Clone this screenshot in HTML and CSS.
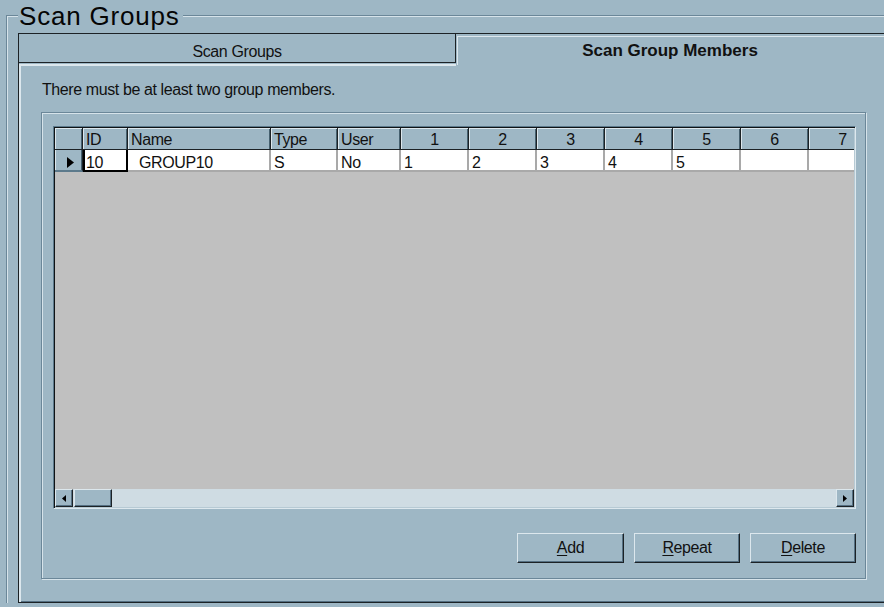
FILE: index.html
```html
<!DOCTYPE html>
<html lang="en">
<head>
<meta charset="utf-8">
<title>Scan Groups</title>
<link rel="stylesheet" href="styles.css">
</head>
<body>
<div class="groupbox">
  <span class="groupbox-title">Scan Groups</span>
  <div class="tabctl">
    <div class="tabstrip">
      <div class="tab">Scan Groups</div>
      <div class="tab tab-active">Scan Group Members</div>
    </div>
    <div class="tabpage">
      <p class="hint">There must be at least two group members.</p>
      <div class="frame">
        <div class="grid">
          <div class="grid-view">
            <table class="grid-table">
              <colgroup>
                <col class="w-ind"><col class="w-id"><col class="w-name"><col class="w-type"><col class="w-user">
                <col class="w-num"><col class="w-num"><col class="w-num"><col class="w-num"><col class="w-num"><col class="w-num"><col class="w-num">
              </colgroup>
              <thead>
                <tr>
                  <th class="ind"></th><th>ID</th><th>Name</th><th>Type</th><th>User</th>
                  <th class="num">1</th><th class="num">2</th><th class="num">3</th><th class="num">4</th><th class="num">5</th><th class="num">6</th><th class="num">7</th>
                </tr>
              </thead>
              <tbody>
                <tr>
                  <td class="ind"><svg class="row-arrow" width="7" height="11" viewBox="0 0 7 11"><polygon points="0,0 7,5.5 0,11" fill="#000"/></svg></td>
                  <td class="current">10</td>
                  <td class="name">GROUP10</td>
                  <td>S</td>
                  <td>No</td>
                  <td>1</td><td>2</td><td>3</td><td>4</td><td>5</td><td></td><td></td>
                </tr>
              </tbody>
            </table>
          </div>
          <div class="hscroll">
            <div class="sb-btn"><svg width="4" height="7" viewBox="0 0 4 7"><polygon points="4,0 0,3.5 4,7" fill="#000"/></svg></div>
            <div class="sb-thumb"></div>
            <div class="sb-track"></div>
            <div class="sb-btn"><svg width="4" height="7" viewBox="0 0 4 7"><polygon points="0,0 4,3.5 0,7" fill="#000"/></svg></div>
          </div>
        </div>
        <div class="actions">
          <button class="btn btn-wide" type="button"><u>A</u>dd</button>
          <button class="btn" type="button"><u>R</u>epeat</button>
          <button class="btn" type="button"><u>D</u>elete</button>
        </div>
      </div>
    </div>
  </div>
</div>
</body>
</html>
```
FILE: styles.css
```css
:root {
  --bg: #9eb7c5;
  --hilite: #dce7ed;
  --etch-dark: #6b8799;
  --etch-light: #d6e3ea;
  --edge: #1c2226;
  --shade: #557083;
  --cell-line: #a9a9a9;
  --well: #c0c0c0;
  --track: #cfdce3;
}

html, body {
  margin: 0;
  height: 100%;
  overflow: hidden;
  background: var(--bg);
}

body {
  font-family: "Liberation Sans", Arial, sans-serif;
  font-size: 16px;
  letter-spacing: -0.4px;
  color: #111;
}

/* outer group box with its caption sitting on the top rule */
.groupbox {
  position: relative;
  margin: 15px 0 0 6px;
  padding: 17px 0 0 11px;
  border-top: 1px solid var(--etch-dark);
  border-left: 1px solid var(--etch-dark);
  box-shadow: inset 1px 1px 0 var(--etch-light);
}

.groupbox-title {
  position: absolute;
  left: 11px;
  top: -15px;
  padding: 0 3px 0 1px;
  background: var(--bg);
  font-size: 26px;
  line-height: 30px;
  letter-spacing: 0.8px;
  color: #050505;
}

/* tab control */
.tabctl {
  border-top: 1px solid var(--edge);
  border-left: 1px solid var(--edge);
}

.tabstrip {
  display: flex;
}

.tab {
  box-sizing: border-box;
  width: 437px;
  height: 29px;
  padding-top: 8px;
  line-height: 20px;
  text-align: center;
  border-right: 1px solid var(--edge);
  border-bottom: 1px solid var(--edge);
  box-shadow: 0 1px 0 var(--bg), 0 3px 0 var(--hilite);
  white-space: nowrap;
}

.tab-active {
  flex: 1;
  width: auto;
  height: auto;
  margin-bottom: -2px;
  padding-top: 7px;
  border: 0;
  box-shadow: inset 1px 2px 0 var(--bg), inset 2px 3px 0 var(--hilite);
  font-weight: bold;
  font-size: 17px;
  letter-spacing: 0;
}

.tabpage {
  padding: 17px 0 23px 22px;
  border-bottom: 1px solid var(--edge);
  box-shadow: inset 2px 0 0 var(--hilite), inset 0 -1px 0 var(--shade);
}

.hint {
  margin: 0 0 12px 1px;
  line-height: 20px;
  white-space: nowrap;
}

/* etched frame around the grid and its buttons */
.frame {
  box-sizing: border-box;
  width: 825px;
  padding: 13px 9px 15px 11px;
  border: 1px solid var(--etch-dark);
  box-shadow: inset 1px 1px 0 var(--etch-light), 1px 1px 0 var(--etch-light);
}

/* data grid */
.grid {
  box-sizing: border-box;
  width: 803px;
  height: 383px;
  padding: 1px;
  display: flex;
  flex-direction: column;
  background: var(--well);
  border: 1px solid;
  border-color: #5d7a8c #dde8ee #dde8ee #5d7a8c;
  box-shadow: inset 1px 1px 0 #0f1316, inset -1px -1px 0 #b7cad4;
}

.grid-view {
  flex: 1;
  min-height: 0;
  overflow: hidden;
}

.grid-table {
  table-layout: fixed;
  width: 822px;
  border-collapse: separate;
  border-spacing: 0;
}

.w-ind { width: 28px; }
.w-id { width: 45px; }
.w-name { width: 143px; }
.w-type { width: 67px; }
.w-user { width: 63px; }
.w-num { width: 68px; }

.grid-table th,
.grid-table td {
  box-sizing: border-box;
  overflow: hidden;
  white-space: nowrap;
  vertical-align: top;
  text-align: left;
}

.grid-table th {
  height: 22px;
  padding: 2px 3px 0;
  line-height: 19px;
  font-weight: normal;
  background: var(--bg);
  border-right: 1px solid var(--edge);
  border-bottom: 1px solid var(--edge);
  box-shadow: inset 1px 1px 0 var(--hilite), inset -1px 0 0 #45606f;
}

.grid-table th.num {
  text-align: center;
}

.grid-table td {
  height: 22px;
  padding: 5px 3px 0;
  line-height: 15px;
  background: #fff;
  border-right: 2px solid var(--cell-line);
  border-bottom: 2px solid var(--cell-line);
}

.grid-table td.ind {
  padding: 0 0 0 4px;
  background: var(--bg);
  border-right: 1px solid var(--edge);
  border-bottom: 2px solid #5d7a8c;
  box-shadow: inset 1px 0 0 var(--hilite), inset -1px 0 0 #45606f;
}

.row-arrow {
  display: block;
  margin: 7px auto 0;
}

.grid-table td.current {
  border-right-color: #000;
  border-bottom-color: #000;
  box-shadow: inset 2px 0 0 #000;
}

.grid-table td.name {
  padding-left: 11px;
}

/* horizontal scroll bar */
.hscroll {
  height: 18px;
  display: flex;
  background: var(--track);
}

.sb-btn,
.sb-thumb {
  box-sizing: border-box;
  height: 18px;
  background: var(--bg);
  border: 1px solid;
  border-color: var(--hilite) var(--edge) var(--edge) var(--hilite);
  box-shadow: inset -1px -1px 0 var(--shade);
}

.sb-btn {
  width: 18px;
  display: flex;
  align-items: center;
  justify-content: center;
}

.sb-thumb {
  width: 38px;
  margin-left: 1px;
}

.sb-track {
  flex: 1;
}

/* command buttons */
.actions {
  display: flex;
  justify-content: flex-end;
  gap: 10px;
  margin-top: 24px;
}

.btn {
  box-sizing: border-box;
  width: 106px;
  height: 30px;
  padding: 0;
  font: inherit;
  letter-spacing: inherit;
  line-height: 20px;
  color: #111;
  background: var(--bg);
  border: 1px solid;
  border-color: var(--hilite) var(--edge) var(--edge) var(--hilite);
  box-shadow: inset -1px -1px 0 var(--shade);
  border-radius: 0;
}

.btn-wide {
  width: 107px;
}

.btn u {
  text-underline-offset: 2px;
}
```
